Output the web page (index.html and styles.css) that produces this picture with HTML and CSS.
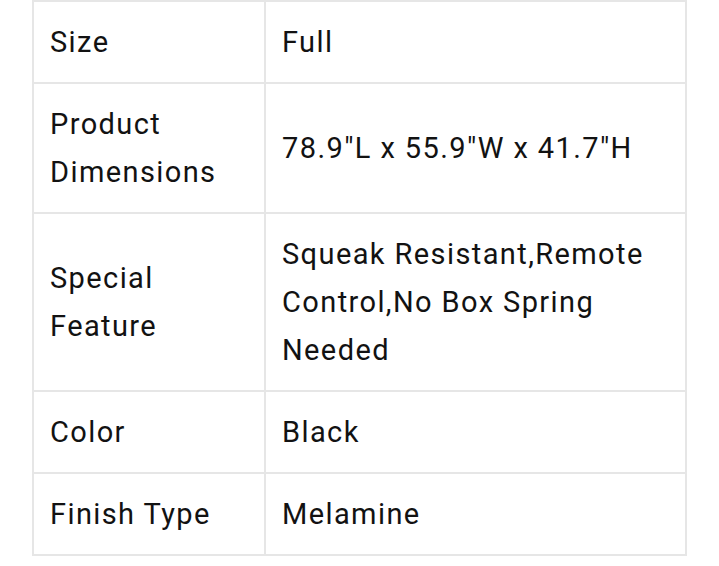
FILE: index.html
```html
<!DOCTYPE html>
<html>
<head>
<meta charset="utf-8">
<link rel="stylesheet" href="styles.css">
</head>
<body>
<table class="specs">
  <colgroup><col class="col-label"><col class="col-value"></colgroup>
  <tr><td>Size</td><td>Full</td></tr>
  <tr><td>Product<br>Dimensions</td><td>78.9"L x 55.9"W x 41.7"H</td></tr>
  <tr><td>Special<br>Feature</td><td>Squeak Resistant,Remote<br>Control,No Box Spring<br>Needed</td></tr>
  <tr><td>Color</td><td>Black</td></tr>
  <tr><td>Finish Type</td><td>Melamine</td></tr>
</table>
</body>
</html>
```
FILE: styles.css
```css
html, body {
  margin: 0;
  padding: 0;
  background: #ffffff;
}
.specs {
  margin-left: 32px;
  width: 655px;
  table-layout: fixed;
  border-collapse: collapse;
  font-family: Roboto, "Liberation Sans", sans-serif;
  font-size: 29px;
  line-height: 48px;
  letter-spacing: 1.4px;
  color: #121212;
}
.col-label { width: 232px; }
.specs td {
  border: 2px solid #e6e6e6;
  padding: 16px 16px;
  vertical-align: middle;
  white-space: nowrap;
}
```
